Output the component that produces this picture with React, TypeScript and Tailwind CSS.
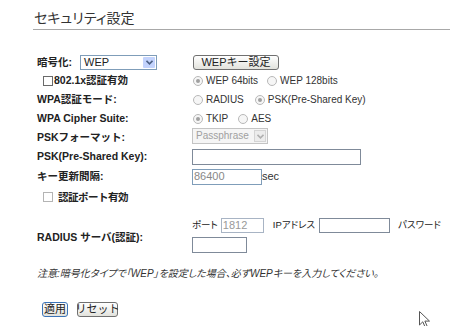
import React from "react";

function Label({ children }: { children: React.ReactNode }) {
   return (
      <div className="w-[155px] shrink-0 text-[10.5px] font-bold text-[#222] leading-[13px]">
         {children}
      </div>
   );
}

function Radio({ checked, label }: { checked?: boolean; label: string }) {
   return (
      <span className="flex items-center text-[10px] text-[#333]">
         <span className="flex h-[10px] w-[10px] shrink-0 items-center justify-center rounded-full border border-[#b8b8b8] bg-[#f6f6f6]">
            {checked && (
               <span className="h-[4px] w-[4px] rounded-full bg-[#a0a0a0]" />
            )}
         </span>
         <span className="ml-[3px]">{label}</span>
      </span>
   );
}

function Chevron({ color }: { color: string }) {
   return (
      <svg width="7" height="5" viewBox="0 0 7 5">
         <path d="M0.5 0.8 L3.5 3.8 L6.5 0.8" stroke={color} strokeWidth="1.6" fill="none" />
      </svg>
   );
}

function Button({
   children,
   primary,
   className,
}: {
   children: React.ReactNode;
   primary?: boolean;
   className?: string;
}) {
   return (
      <button
         className={
            "flex shrink-0 items-center justify-center whitespace-nowrap rounded-[3px] border bg-gradient-to-b from-[#ffffff] to-[#e2e2dc] p-0 text-[11px] leading-none text-[#222] " +
            (primary ? "border-[#3b74b8] " : "border-[#707070] ") +
            (className ?? "")
         }
      >
         {children}
      </button>
   );
}

export default function App() {
   return (
      <div className="relative h-[326px] w-[450px] overflow-hidden whitespace-nowrap bg-white font-['Liberation_Sans','Noto_Sans_CJK_JP',sans-serif] text-[#222]">
         <div className="pl-[34px] pt-[10px] text-[14px] leading-[16px] text-[#333] [font-feature-settings:'palt']">
            セキュリティ設定
         </div>
         <div className="ml-[33px] mt-[3px] border-t border-[#a8a8a8]" />

         <div className="pl-[37px] pt-[23px]">
            {/* 暗号化 */}
            <div className="flex h-[18px] items-center">
               <div className="flex w-[155px] shrink-0 items-center">
                  <span className="text-[10.5px] font-bold leading-[13px]">暗号化:</span>
                  <div className="ml-[8px] flex h-[15px] w-[77px] items-center border border-[#7f9db9] bg-white">
                     <span className="flex-1 pl-[3px] text-[11px] leading-none text-[#222]">WEP</span>
                     <span className="mr-[1px] flex h-[11px] w-[12px] items-center justify-center rounded-[1px] bg-[#c3d3fd]">
                        <Chevron color="#4d6185" />
                     </span>
                  </div>
               </div>
               <Button className="ml-px h-[15px] w-[86px]">WEPキー設定</Button>
            </div>

            {/* 802.1x */}
            <div className="flex h-[19px] items-center">
               <div className="flex w-[155px] shrink-0 items-center pl-[6px]">
                  <span className="h-[10px] w-[10px] border border-[#6a6a6a] bg-white" />
                  <span className="ml-[1px] text-[10.5px] font-bold leading-[13px]">802.1x認証有効</span>
               </div>
               <div className="flex items-center pl-px">
                  <Radio checked label="WEP 64bits" />
                  <span className="w-[9px]" />
                  <Radio label="WEP 128bits" />
               </div>
            </div>

            {/* WPA認証モード */}
            <div className="flex h-[19px] items-center">
               <Label>WPA認証モード:</Label>
               <div className="flex items-center pl-px">
                  <Radio label="RADIUS" />
                  <span className="w-[11px]" />
                  <Radio checked label="PSK(Pre-Shared Key)" />
               </div>
            </div>

            {/* Cipher */}
            <div className="flex h-[19px] items-center">
               <Label>WPA Cipher Suite:</Label>
               <div className="flex items-center pl-px">
                  <Radio checked label="TKIP" />
                  <span className="w-[10px]" />
                  <Radio label="AES" />
               </div>
            </div>

            {/* PSKフォーマット */}
            <div className="flex h-[19px] items-center">
               <Label>PSKフォーマット:</Label>
               <div className="mb-[3px] flex h-[16px] w-[76px] shrink-0 items-center border border-[#c4c4c4] bg-[#f5f5f5]">
                  <span className="flex-1 overflow-hidden pl-[3px] text-[10px] leading-none text-[#a0a0a0]">Passphrase</span>
                  <span className="mr-[1px] flex h-[12px] w-[12px] shrink-0 items-center justify-center border border-[#d4d4d4] bg-[#ececec]">
                     <Chevron color="#b0b0b0" />
                  </span>
               </div>
            </div>

            {/* PSK */}
            <div className="flex h-[19px] items-center">
               <Label>PSK(Pre-Shared Key):</Label>
               <input
                  className="h-[16px] w-[169px] shrink-0 border border-[#7f8a99] bg-white outline-none"
                  defaultValue=""
               />
            </div>

            {/* キー更新間隔 */}
            <div className="flex h-[21px] items-center">
               <Label>キー更新間隔:</Label>
               <input
                  className="h-[16px] w-[70px] shrink-0 border border-[#7f9db9] bg-white px-[1px] text-[11px] text-[#888] outline-none"
                  defaultValue="86400"
               />
               <span className="text-[11px] text-[#333]">sec</span>
            </div>

            {/* 認証ポート有効 */}
            <div className="flex h-[20px] items-center">
               <div className="flex w-[155px] shrink-0 items-center pl-[6px]">
                  <span className="h-[10px] w-[10px] border border-[#b4b4b4] bg-white" />
                  <span className="ml-[5px] text-[10.5px] font-bold leading-[13px] tracking-[-0.5px]">認証ポート有効</span>
               </div>
            </div>

            {/* RADIUS サーバ */}
            <div className="flex">
               <div className="w-[155px] shrink-0 pt-[24px] text-[10.5px] font-bold leading-[13px]">
                  RADIUS サーバ(認証):
               </div>
               <div className="pt-[11px]">
                  <div className="flex h-[15px] items-center text-[9.5px] text-[#222] [font-feature-settings:'palt']">
                     <span className="shrink-0">ポート</span>
                     <input
                        className="ml-[3px] h-[15px] w-[43px] shrink-0 border border-[#a8b4c4] bg-white px-[1px] text-[11px] text-[#999] outline-none"
                        defaultValue="1812"
                     />
                     <span className="ml-[9px] shrink-0">IPアドレス</span>
                     <input
                        className="ml-[4px] h-[15px] w-[71px] shrink-0 border border-[#7f8a99] bg-white outline-none"
                        defaultValue=""
                     />
                     <span className="ml-[8px] shrink-0">パスワード</span>
                  </div>
                  <input
                     className="mt-[4px] h-[16px] w-[55px] border border-[#7f8a99] bg-white outline-none"
                     defaultValue=""
                  />
               </div>
            </div>

            <div className="mt-[10px] text-[10px] italic leading-[13px] text-[#333] [font-feature-settings:'palt']">
               注意:暗号化タイプで「WEP」を設定した場合、必ずWEPキーを入力してください。
            </div>

            <div className="mt-[22px] flex items-center pl-[5px]">
               <Button primary className="h-[15px] w-[26px]">
                  適用
               </Button>
               <Button className="ml-[9px] h-[15px] w-[41px]">リセット</Button>
            </div>
         </div>

         <svg
            className="absolute left-[419px] top-[311px]"
            width="12"
            height="18"
            viewBox="0 0 12 18"
         >
            <path
               d="M0.5 0.5 L0.5 14 L3.8 10.8 L6.3 16.5 L8.3 15.6 L5.9 10.1 L10.5 10.1 Z"
               fill="white"
               stroke="#555"
               strokeWidth="1"
            />
         </svg>
      </div>
   );
}
